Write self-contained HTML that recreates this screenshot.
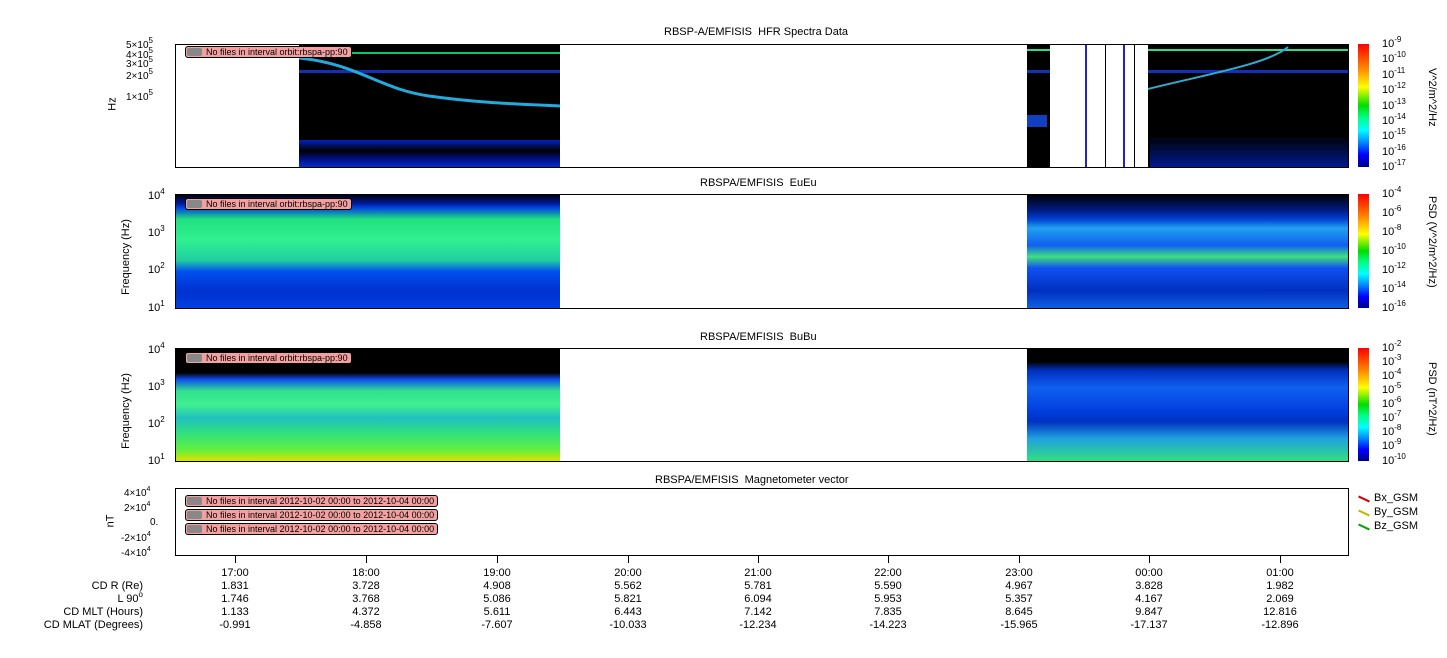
<!DOCTYPE html>
<html><head><meta charset="utf-8"><style>
body{margin:0;width:1447px;height:658px;background:#fff;position:relative;overflow:hidden;font-family:"Liberation Sans","DejaVu Sans",sans-serif;color:#000}
div{position:absolute}
sup{line-height:0;vertical-align:5px}
.t{font-size:11px;white-space:nowrap}
.box{border:1px solid #000;box-sizing:border-box}
.lbl{font-size:9px;background:#f4a0a0;border:1px solid #000;border-radius:3px;padding:0 3px 0 20px;height:10px;line-height:10px;white-space:nowrap}
.lbl:before{content:"";position:absolute;left:1px;top:1px;width:15px;height:8px;background:#888;border-radius:2px}
.cb{left:1358px;width:11px;background:linear-gradient(to bottom,#f00,#f80 20%,#ff0 35%,#0d0 50%,#0f8 60%,#0ff 70%,#08f 80%,#00f 90%,#008)}
.r{font-size:11px;text-align:right;width:150px;left:0}
.tick{width:1px;height:6px;background:#000}
.cl{left:1382px;font-size:11px;white-space:nowrap}
.cl sup{font-size:8px}
</style></head><body>
<div class="t" style="left:664px;top:26px">RBSP-A/EMFISIS&nbsp; HFR Spectra Data</div>
<div class="t" style="left:700px;top:177px">RBSPA/EMFISIS&nbsp; EuEu</div>
<div class="t" style="left:700px;top:331px">RBSPA/EMFISIS&nbsp; BuBu</div>
<div class="t" style="left:655px;top:474px">RBSPA/EMFISIS&nbsp; Magnetometer vector</div>

<!-- panel 1 -->
<div style="left:299px;top:44px;width:261px;height:123px;background:#000"></div>
<div style="left:299px;top:140px;width:261px;height:27px;background:linear-gradient(#0020c0,#000 40%,#001080 70%,#0030d0)"></div>
<div style="left:299px;top:52px;width:261px;height:2px;background:#0c6"></div>
<div style="left:299px;top:70px;width:261px;height:3px;background:#1030c0"></div>
<svg style="position:absolute;left:299px;top:44px" width="261" height="70"><path d="M0 14 C60 20 80 45 130 52 S220 60 261 62" stroke="#2ad" stroke-width="3" fill="none"/></svg>
<div style="left:1027px;top:44px;width:321px;height:123px;background:#000"></div>
<div style="left:1027px;top:49px;width:321px;height:2px;background:#2d9"></div>
<div style="left:1027px;top:70px;width:321px;height:3px;background:#1030c0"></div>
<div style="left:1027px;top:115px;width:20px;height:12px;background:#1040c0"></div>
<div style="left:1150px;top:135px;width:198px;height:32px;background:linear-gradient(#000,#001a90)"></div>
<div style="left:1050px;top:44px;width:98px;height:123px;background:#fff"></div>
<div style="left:1085px;top:44px;width:2px;height:123px;background:#22c"></div>
<div style="left:1105px;top:44px;width:1px;height:123px;background:#000"></div>
<div style="left:1123px;top:44px;width:2px;height:123px;background:#22c"></div>
<div style="left:1134px;top:44px;width:1px;height:123px;background:#000"></div>
<svg style="position:absolute;left:1148px;top:44px" width="200" height="50"><path d="M0 45 C60 30 120 20 140 3" stroke="#3ac" stroke-width="2" fill="none"/></svg>
<div class="box" style="left:175px;top:44px;width:1174px;height:124px"></div>
<div class="lbl" style="left:185px;top:46px">No files in interval orbit:rbspa-pp:90</div>
<div class="t" style="left:126px;top:40px;font-size:10px">5×10<sup style="font-size:8px">5</sup></div>
<div class="t" style="left:126px;top:50px;font-size:10px">4×10<sup style="font-size:8px">5</sup></div>
<div class="t" style="left:126px;top:59px;font-size:10px">3×10<sup style="font-size:8px">5</sup></div>
<div class="t" style="left:126px;top:71px;font-size:10px">2×10<sup style="font-size:8px">5</sup></div>
<div class="t" style="left:126px;top:92px;font-size:10px">1×10<sup style="font-size:8px">5</sup></div>
<div class="t" style="left:106px;top:98px;transform:rotate(-90deg)">Hz</div>

<!-- panel 2 -->
<div style="left:175px;top:194px;width:385px;height:114px;background:linear-gradient(#000 0,#001890 8%,#0040e0 12%,#20e080 22%,#30f090 40%,#20d0a0 58%,#0050f0 68%,#0030d0 85%,#0040e0 100%)"></div>
<div style="left:1027px;top:194px;width:321px;height:114px;background:linear-gradient(#000 0,#001a80 14%,#0040d0 22%,#20a0f0 30%,#1060f0 45%,#40e080 55%,#1050f0 65%,#0030c0 85%,#1060e0 100%)"></div>
<div class="box" style="left:175px;top:194px;width:1174px;height:115px"></div>
<div class="lbl" style="left:185px;top:198px">No files in interval orbit:rbspa-pp:90</div>
<div class="t" style="left:148px;top:190px">10<sup style="font-size:8px">4</sup></div>
<div class="t" style="left:148px;top:227px">10<sup style="font-size:8px">3</sup></div>
<div class="t" style="left:148px;top:264px">10<sup style="font-size:8px">2</sup></div>
<div class="t" style="left:148px;top:302px">10<sup style="font-size:8px">1</sup></div>
<div class="t" style="left:88px;top:251px;transform:rotate(-90deg)">Frequency (Hz)</div>

<!-- panel 3 -->
<div style="left:175px;top:348px;width:385px;height:113px;background:linear-gradient(#000 0,#000 22%,#1050f0 28%,#30e090 38%,#40f090 50%,#20c0c0 62%,#30e080 75%,#60f040 90%,#e0e000 100%)"></div>
<div style="left:1027px;top:348px;width:321px;height:113px;background:linear-gradient(#000 0,#000 12%,#0030c0 20%,#1060f0 35%,#0040e0 55%,#0030c0 65%,#20a0e0 80%,#30e080 100%)"></div>
<div class="box" style="left:175px;top:348px;width:1174px;height:114px"></div>
<div class="lbl" style="left:185px;top:352px">No files in interval orbit:rbspa-pp:90</div>
<div class="t" style="left:148px;top:344px">10<sup style="font-size:8px">4</sup></div>
<div class="t" style="left:148px;top:381px">10<sup style="font-size:8px">3</sup></div>
<div class="t" style="left:148px;top:418px">10<sup style="font-size:8px">2</sup></div>
<div class="t" style="left:148px;top:455px">10<sup style="font-size:8px">1</sup></div>
<div class="t" style="left:88px;top:405px;transform:rotate(-90deg)">Frequency (Hz)</div>

<!-- panel 4 -->
<div class="box" style="left:175px;top:488px;width:1174px;height:68px"></div>
<div class="lbl" style="left:185px;top:495px">No files in interval 2012-10-02 00:00 to 2012-10-04 00:00</div>
<div class="lbl" style="left:185px;top:509px">No files in interval 2012-10-02 00:00 to 2012-10-04 00:00</div>
<div class="lbl" style="left:185px;top:523px">No files in interval 2012-10-02 00:00 to 2012-10-04 00:00</div>
<div class="t" style="left:124px;top:488px;font-size:10px">4×10<sup style="font-size:7px">4</sup></div>
<div class="t" style="left:124px;top:503px;font-size:10px">2×10<sup style="font-size:7px">4</sup></div>
<div class="t" style="left:150px;top:517px;font-size:10px">0.</div>
<div class="t" style="left:121px;top:533px;font-size:10px">-2×10<sup style="font-size:7px">4</sup></div>
<div class="t" style="left:121px;top:548px;font-size:10px">-4×10<sup style="font-size:7px">4</sup></div>
<div class="t" style="left:104px;top:515px;transform:rotate(-90deg)">nT</div>
<div class="t" style="left:1374px;top:492px">Bx_GSM</div>
<div class="t" style="left:1374px;top:506px">By_GSM</div>
<div class="t" style="left:1374px;top:520px">Bz_GSM</div>
<div style="left:1358px;top:498px;width:12px;height:2px;background:#c00;transform:rotate(25deg)"></div>
<div style="left:1358px;top:512px;width:12px;height:2px;background:#bb0;transform:rotate(25deg)"></div>
<div style="left:1358px;top:526px;width:12px;height:2px;background:#0a0;transform:rotate(25deg)"></div>

<!-- colorbars -->
<div class="cb" style="top:44px;height:123px"></div>
<div class="cb" style="top:194px;height:114px"></div>
<div class="cb" style="top:348px;height:113px"></div>
<div class="cl" style="top:38px">10<sup>-9</sup></div>
<div class="cl" style="top:53px">10<sup>-10</sup></div>
<div class="cl" style="top:69px">10<sup>-11</sup></div>
<div class="cl" style="top:84px">10<sup>-12</sup></div>
<div class="cl" style="top:100px">10<sup>-13</sup></div>
<div class="cl" style="top:115px">10<sup>-14</sup></div>
<div class="cl" style="top:130px">10<sup>-15</sup></div>
<div class="cl" style="top:146px">10<sup>-16</sup></div>
<div class="cl" style="top:161px">10<sup>-17</sup></div>
<div class="cl" style="top:188px">10<sup>-4</sup></div>
<div class="cl" style="top:207px">10<sup>-6</sup></div>
<div class="cl" style="top:226px">10<sup>-8</sup></div>
<div class="cl" style="top:245px">10<sup>-10</sup></div>
<div class="cl" style="top:264px">10<sup>-12</sup></div>
<div class="cl" style="top:283px">10<sup>-14</sup></div>
<div class="cl" style="top:302px">10<sup>-16</sup></div>
<div class="cl" style="top:342px">10<sup>-2</sup></div>
<div class="cl" style="top:356px">10<sup>-3</sup></div>
<div class="cl" style="top:370px">10<sup>-4</sup></div>
<div class="cl" style="top:384px">10<sup>-5</sup></div>
<div class="cl" style="top:398px">10<sup>-6</sup></div>
<div class="cl" style="top:412px">10<sup>-7</sup></div>
<div class="cl" style="top:426px">10<sup>-8</sup></div>
<div class="cl" style="top:440px">10<sup>-9</sup></div>
<div class="cl" style="top:455px">10<sup>-10</sup></div>
<div class="t" style="left:1438px;top:68px;transform:rotate(90deg);transform-origin:0 0">V^2/m^2/Hz</div>
<div class="t" style="left:1438px;top:196px;transform:rotate(90deg);transform-origin:0 0">PSD (V^2/m^2/Hz)</div>
<div class="t" style="left:1438px;top:362px;transform:rotate(90deg);transform-origin:0 0">PSD (nT^2/Hz)</div>

<div class="tick" style="left:235px;top:555px;height:8px"></div>
<div class="tick" style="left:366px;top:555px;height:8px"></div>
<div class="tick" style="left:497px;top:555px;height:8px"></div>
<div class="tick" style="left:628px;top:555px;height:8px"></div>
<div class="tick" style="left:758px;top:555px;height:8px"></div>
<div class="tick" style="left:888px;top:555px;height:8px"></div>
<div class="tick" style="left:1019px;top:555px;height:8px"></div>
<div class="tick" style="left:1149px;top:555px;height:8px"></div>
<div class="tick" style="left:1280px;top:555px;height:8px"></div>

<div class="r" style="top:580px;left:-7px">CD R (Re)</div>
<div class="r" style="top:593px;left:-7px">L 90<sup style="font-size:8px">o</sup></div>
<div class="r" style="top:606px;left:-7px">CD MLT (Hours)</div>
<div class="r" style="top:619px;left:-7px">CD MLAT (Degrees)</div>
<div style="left:205px;top:567px;font-size:11px;line-height:13px;text-align:center;width:60px">17:00<br>1.831<br>1.746<br>1.133<br>-0.991</div>
<div style="left:336px;top:567px;font-size:11px;line-height:13px;text-align:center;width:60px">18:00<br>3.728<br>3.768<br>4.372<br>-4.858</div>
<div style="left:467px;top:567px;font-size:11px;line-height:13px;text-align:center;width:60px">19:00<br>4.908<br>5.086<br>5.611<br>-7.607</div>
<div style="left:598px;top:567px;font-size:11px;line-height:13px;text-align:center;width:60px">20:00<br>5.562<br>5.821<br>6.443<br>-10.033</div>
<div style="left:728px;top:567px;font-size:11px;line-height:13px;text-align:center;width:60px">21:00<br>5.781<br>6.094<br>7.142<br>-12.234</div>
<div style="left:858px;top:567px;font-size:11px;line-height:13px;text-align:center;width:60px">22:00<br>5.590<br>5.953<br>7.835<br>-14.223</div>
<div style="left:989px;top:567px;font-size:11px;line-height:13px;text-align:center;width:60px">23:00<br>4.967<br>5.357<br>8.645<br>-15.965</div>
<div style="left:1119px;top:567px;font-size:11px;line-height:13px;text-align:center;width:60px">00:00<br>3.828<br>4.167<br>9.847<br>-17.137</div>
<div style="left:1250px;top:567px;font-size:11px;line-height:13px;text-align:center;width:60px">01:00<br>1.982<br>2.069<br>12.816<br>-12.896</div>
</body></html>
